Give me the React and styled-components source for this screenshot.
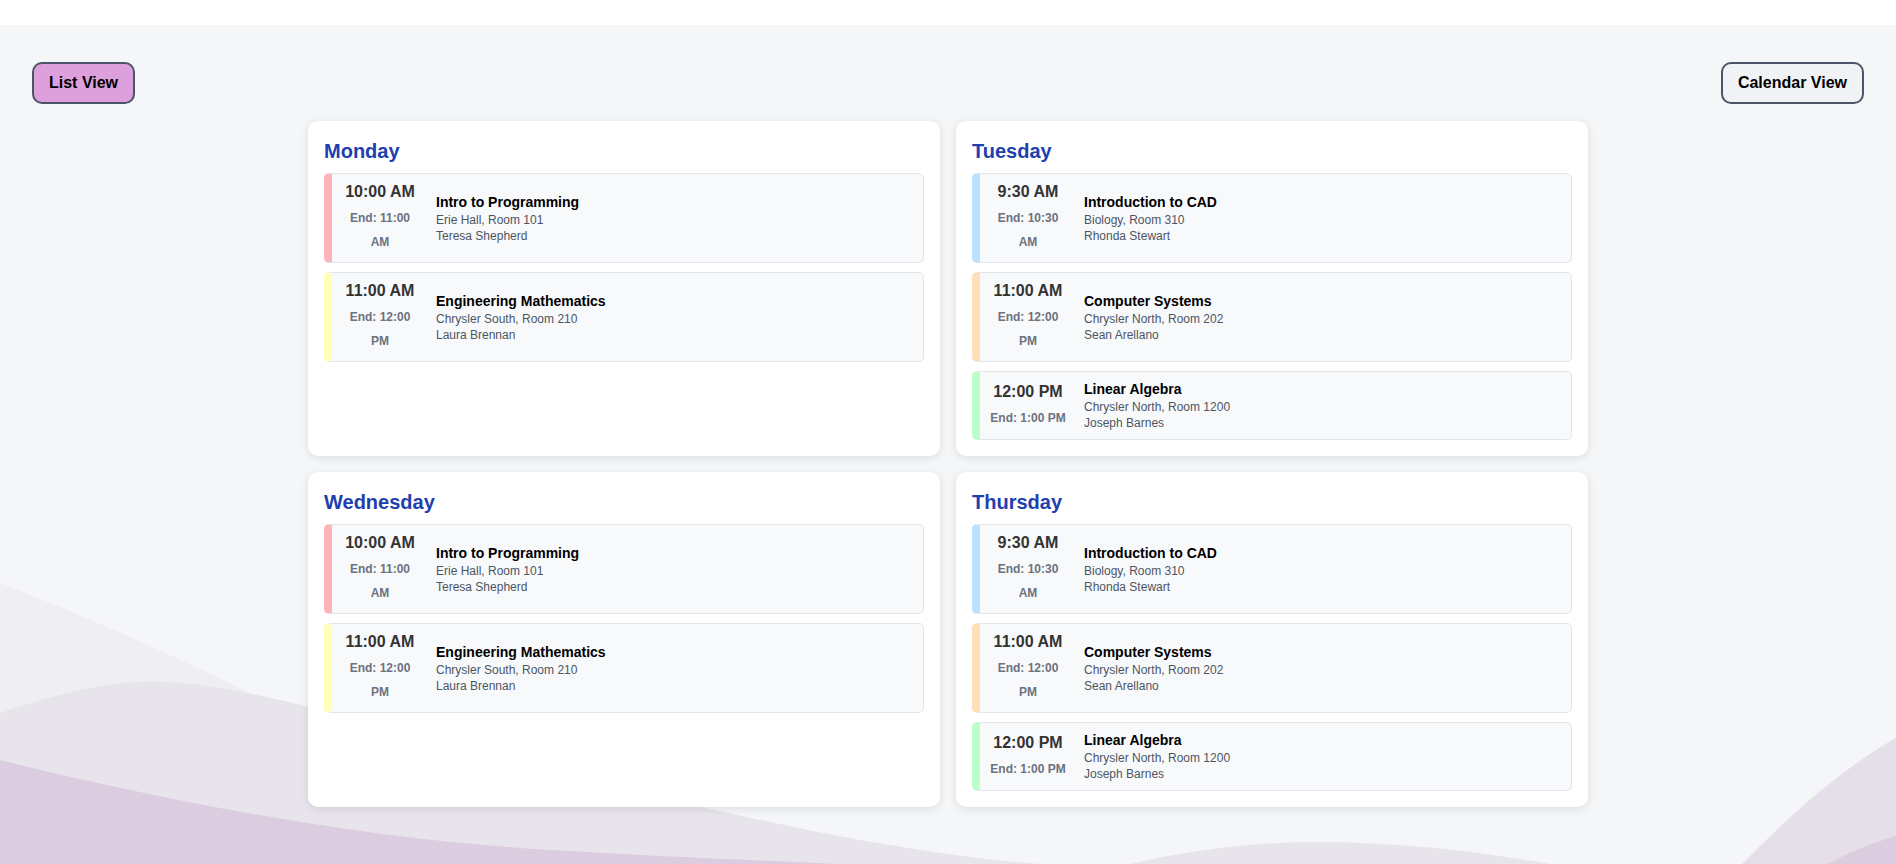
import React from 'react';
import styled, { createGlobalStyle } from 'styled-components';

// Global Styles
const GlobalStyle = createGlobalStyle`
  body {
    margin: 0;
    padding: 0;
    font-family: 'Liberation Sans', Arial, sans-serif;
    background: #f5f6f8;
    color: #000;
  }
  * {
    box-sizing: border-box;
  }
`;

const TopBar = styled.div`
  height: 25px;
  background: #ffffff;
`;

const Main = styled.main`
  position: relative;
  min-height: calc(100vh - 25px);
  padding: 37px 32px 40px;
  background: #f5f6f8;
  overflow: hidden;
`;

const Waves = styled.svg`
  position: absolute;
  left: 0;
  top: 0;
  width: 100%;
  height: 100%;
  pointer-events: none;
  z-index: 0;
`;

const Content = styled.div`
  position: relative;
  z-index: 1;
`;

// Toolbar
const Toolbar = styled.div`
  display: flex;
  justify-content: space-between;
  align-items: center;
`;

const ViewButton = styled.button`
  padding: 10px 15px;
  font-family: inherit;
  font-size: 16px;
  font-weight: bold;
  color: #000;
  background: ${(p) => (p.$active ? '#dda0dd' : '#f0f2f5')};
  border: 2px solid #4a5568;
  border-radius: 10px;
  cursor: pointer;
`;

// Week grid
const WeekGrid = styled.div`
  display: grid;
  grid-template-columns: repeat(2, 1fr);
  gap: 16px;
  max-width: 1280px;
  margin: 17px auto 0;
`;

const DayCard = styled.section`
  background: #ffffff;
  border-radius: 10px;
  box-shadow: 0 2px 8px rgba(0, 0, 0, 0.1);
  padding: 16px;
`;

const DayTitle = styled.h2`
  margin: 0 0 8px;
  font-size: 20px;
  line-height: 28px;
  font-weight: bold;
  color: #1e40af;
`;

const EventList = styled.div`
  display: flex;
  flex-direction: column;
  gap: 9px;
`;

const EventItem = styled.div`
  display: flex;
  align-items: center;
  gap: 16px;
  padding: 8px 16px 8px 8px;
  background: #f8f9fb;
  border: 1px solid #e3e5e9;
  border-left: 8px solid ${(p) => p.$color};
  border-radius: 5px;
`;

const TimeBlock = styled.div`
  width: 80px;
  flex-shrink: 0;
  text-align: center;
`;

const StartTime = styled.div`
  font-size: 16px;
  line-height: 20px;
  font-weight: bold;
  color: #333;
  margin-bottom: 4px;
`;

const EndTime = styled.div`
  font-size: 12px;
  line-height: 24px;
  font-weight: bold;
  color: #6b7280;
`;

const Details = styled.div`
  display: flex;
  flex-direction: column;
`;

const CourseName = styled.div`
  font-size: 14px;
  line-height: 19px;
  font-weight: bold;
  color: #000;
`;

const Meta = styled.div`
  font-size: 12px;
  line-height: 16px;
  color: #4b5563;
`;

const PINK = '#ffb3ba';
const YELLOW = '#ffffba';
const BLUE = '#bae1ff';
const ORANGE = '#ffdfba';
const GREEN = '#baffc9';

const mwClasses = [
  { start: '10:00 AM', end: '11:00 AM', name: 'Intro to Programming', room: 'Erie Hall, Room 101', prof: 'Teresa Shepherd', color: PINK },
  { start: '11:00 AM', end: '12:00 PM', name: 'Engineering Mathematics', room: 'Chrysler South, Room 210', prof: 'Laura Brennan', color: YELLOW },
];

const ttClasses = [
  { start: '9:30 AM', end: '10:30 AM', name: 'Introduction to CAD', room: 'Biology, Room 310', prof: 'Rhonda Stewart', color: BLUE },
  { start: '11:00 AM', end: '12:00 PM', name: 'Computer Systems', room: 'Chrysler North, Room 202', prof: 'Sean Arellano', color: ORANGE },
  { start: '12:00 PM', end: '1:00 PM', name: 'Linear Algebra', room: 'Chrysler North, Room 1200', prof: 'Joseph Barnes', color: GREEN },
];

const days = [
  { day: 'Monday', classes: mwClasses },
  { day: 'Tuesday', classes: ttClasses },
  { day: 'Wednesday', classes: mwClasses },
  { day: 'Thursday', classes: ttClasses },
];

const Background = () => (
  <Waves viewBox="0 25 1896 839" preserveAspectRatio="none">
    <path d="M0,583 C120,630 230,680 330,735 C480,815 560,845 640,864 L0,864 Z" fill="#efeef2" />
    <path d="M0,713 C50,696 95,684 140,682 C200,680 260,695 330,712 C500,760 700,810 860,840 C920,850 980,860 1040,864 L0,864 Z" fill="#e8e4ec" />
    <path d="M0,760 C160,800 350,836 520,848 C660,857 760,860 834,864 L0,864 Z" fill="#dccce0" />
    <path d="M1130,864 C1200,848 1260,842 1320,842 C1410,843 1480,852 1550,864 Z" fill="#e8e4ec" />
    <path d="M1742,864 C1790,815 1840,770 1896,738 L1896,864 Z" fill="#e4dfe8" />
    <path d="M1827,864 C1850,852 1872,843 1896,836 L1896,864 Z" fill="#dccce0" />
  </Waves>
);

const App = () => (
  <>
    <GlobalStyle />
    <TopBar />
    <Main>
      <Background />
      <Content>
        <Toolbar>
          <ViewButton $active>List View</ViewButton>
          <ViewButton>Calendar View</ViewButton>
        </Toolbar>
        <WeekGrid>
          {days.map((d) => (
            <DayCard key={d.day}>
              <DayTitle>{d.day}</DayTitle>
              <EventList>
                {d.classes.map((c) => (
                  <EventItem key={c.name} $color={c.color}>
                    <TimeBlock>
                      <StartTime>{c.start}</StartTime>
                      <EndTime>End: {c.end}</EndTime>
                    </TimeBlock>
                    <Details>
                      <CourseName>{c.name}</CourseName>
                      <Meta>{c.room}</Meta>
                      <Meta>{c.prof}</Meta>
                    </Details>
                  </EventItem>
                ))}
              </EventList>
            </DayCard>
          ))}
        </WeekGrid>
      </Content>
    </Main>
  </>
);

export default App;
